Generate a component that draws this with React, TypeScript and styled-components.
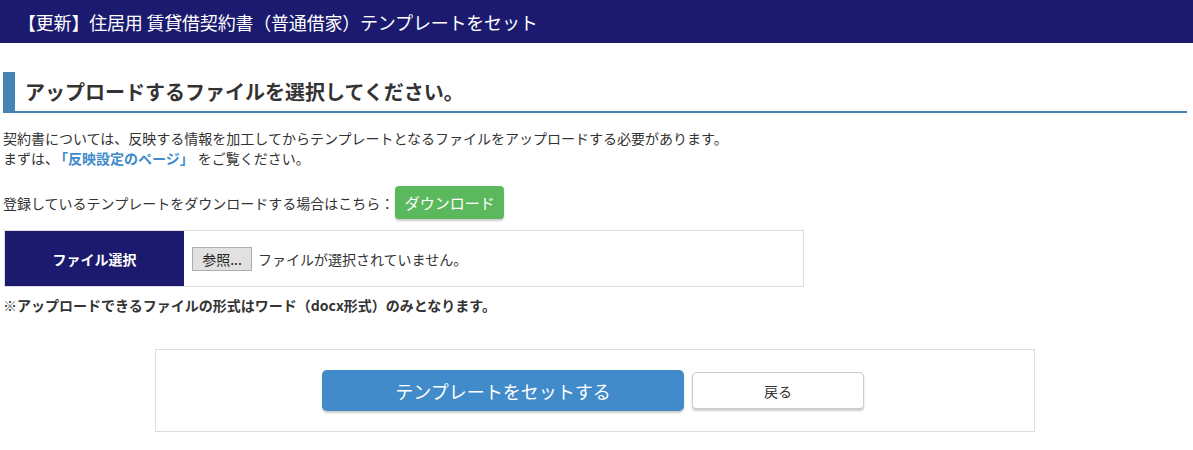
import React from 'react';
import styled, { createGlobalStyle } from 'styled-components';

const GlobalStyle = createGlobalStyle`
  body {
    margin: 0;
    background: #fff;
    color: #333;
    font-family: "Noto Sans CJK JP", "Noto Sans", sans-serif;
    font-size: 14px;
  }
`;

const NAVY = '#1b1a6e';

const TitleBar = styled.header`
  height: 43px;
  background: ${NAVY};
  color: #fff;
  display: flex;
  align-items: center;
  padding-left: 18px;
  font-size: 18px;
  line-height: 1;
  letter-spacing: -0.2px;
`;

const Main = styled.main`
  padding: 0 6px 0 3px;
`;

const Heading = styled.h2`
  margin: 29px 0 0;
  height: 39px;
  display: flex;
  align-items: center;
  padding-left: 10px;
  border-left: 12px solid #4682b4;
  border-bottom: 2px solid #4682b4;
  font-size: 20px;
  font-weight: bold;
  color: #333;
`;

const Text = styled.p<{ $top: number }>`
  margin: ${(p) => p.$top}px 0 0;
  line-height: 20px;
`;

const LinkText = styled.a`
  color: #428bca;
  font-weight: bold;
  text-decoration: none;
  margin: 0 4px 0 2px;
`;

const DownloadRow = styled.div`
  margin-top: 18px;
  display: flex;
  align-items: center;
`;

const GreenButton = styled.button`
  margin-left: 1px;
  width: 109px;
  height: 33px;
  border: none;
  border-radius: 4px;
  background: #5cb85c;
  color: #fff;
  font-family: inherit;
  font-size: 15px;
  font-weight: normal;
  box-shadow: 0 2px 2px rgba(0, 0, 0, 0.2);
`;

const FileTable = styled.div`
  margin: 11px 0 0 1px;
  width: 798px;
  height: 55px;
  display: flex;
  border: 1px solid #ddd;
`;

const LabelCell = styled.div`
  width: 179px;
  background: ${NAVY};
  color: #fff;
  font-weight: bold;
  display: flex;
  align-items: center;
  justify-content: center;
`;

const InputCell = styled.div`
  flex: 1;
  display: flex;
  align-items: center;
  padding-left: 8px;
  gap: 6px;
`;

const BrowseButton = styled.span`
  width: 58px;
  height: 22px;
  display: inline-flex;
  align-items: center;
  justify-content: center;
  background: #e1e1e1;
  border: 1px solid #adadad;
  font-size: 14px;
  color: #222;
`;

const Note = styled.p`
  margin: 8px 0 0;
  line-height: 20px;
  font-weight: bold;
`;

const ActionBox = styled.div`
  margin: 34px auto 0;
  width: 874px;
  border: 1px solid #ddd;
  padding: 20px 4px 20px 0;
  display: flex;
  align-items: center;
  justify-content: center;
  gap: 8px;
`;

const ActionButton = styled.button<{ $primary?: boolean }>`
  font-family: inherit;
  width: ${(p) => (p.$primary ? 362 : 172)}px;
  height: ${(p) => (p.$primary ? 41 : 37)}px;
  border-radius: ${(p) => (p.$primary ? 5 : 4)}px;
  border: ${(p) => (p.$primary ? 'none' : '1px solid #ccc')};
  background: ${(p) => (p.$primary ? '#428bca' : '#fff')};
  color: ${(p) => (p.$primary ? '#fff' : '#333')};
  font-size: ${(p) => (p.$primary ? 18 : 14)}px;
  box-shadow: 0 2px 2px rgba(0, 0, 0, 0.2);
`;

export default function App() {
  return (
    <>
      <GlobalStyle />
      <TitleBar>【更新】住居用 賃貸借契約書（普通借家）テンプレートをセット</TitleBar>
      <Main>
        <Heading>アップロードするファイルを選択してください。</Heading>
        <Text $top={15}>
          契約書については、反映する情報を加工してからテンプレートとなるファイルをアップロードする必要があります。
          <br />
          まずは、<LinkText href="#">「反映設定のページ」</LinkText>をご覧ください。
        </Text>
        <DownloadRow>
          登録しているテンプレートをダウンロードする場合はこちら：
          <GreenButton>ダウンロード</GreenButton>
        </DownloadRow>
        <FileTable>
          <LabelCell>ファイル選択</LabelCell>
          <InputCell>
            <BrowseButton>参照...</BrowseButton>
            ファイルが選択されていません。
          </InputCell>
        </FileTable>
        <Note>※アップロードできるファイルの形式はワード（docx形式）のみとなります。</Note>
        <ActionBox>
          <ActionButton $primary>テンプレートをセットする</ActionButton>
          <ActionButton>戻る</ActionButton>
        </ActionBox>
      </Main>
    </>
  );
}
